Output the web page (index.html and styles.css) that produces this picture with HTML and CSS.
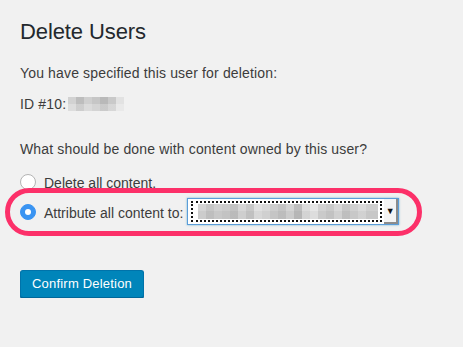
FILE: index.html
```html
<!DOCTYPE html>
<html lang="en">
<head>
  <meta charset="UTF-8" />
  <meta name="viewport" content="width=device-width, initial-scale=1.0" />
  <title>Delete Users</title>
  <link rel="stylesheet" href="styles.css">
</head>
<body>

  <div class="wrap">
    <h1>Delete Users</h1>

    <p class="intro">You have specified this user for deletion:</p>

    <ul class="user-list">
      <li>ID #10: <span class="blur blur-name"></span></li>
    </ul>

    <fieldset class="delete-options">
      <p class="question">What should be done with content owned by this user?</p>
      <ul>
        <li class="option">
          <span class="radio"></span>
          <label>Delete all content.</label>
        </li>
        <!-- fila marcada con el contorno rojo -->
        <li class="option marked">
          <span class="radio checked"></span>
          <label>Attribute all content to:</label>
          <div class="fake-select">
            <div class="focus-ring">
              <span class="blur blur-user"></span>
            </div>
            <div class="arrow">&#9660;</div>
          </div>
        </li>
      </ul>
    </fieldset>

    <button class="button-primary">Confirm Deletion</button>
  </div>

</body>
</html>
```

FILE: styles.css
```css
body {
  background-color: #f1f1f1;
  color: #3c3c3c;
  font-family: "Liberation Sans", Arial, sans-serif;
  font-size: 14px;
  letter-spacing: 0.15px;
  line-height: 18px;
  margin: 0;
}
.wrap {
  padding: 0 20px;
}
h1 {
  color: #23282d;
  font-size: 22px;
  font-weight: normal;
  letter-spacing: -0.1px;
  line-height: 30px;
  margin: 17px 0 0;
}
.intro {
  margin: 17px 0 0;
}
ul {
  list-style: none;
  margin: 0;
  padding: 0;
}
.user-list {
  margin-top: 13px;
}
.user-list li {
  display: flex;
  align-items: center;
}

.blur {
  display: inline-block;
}
.blur-name {
  width: 56px;
  height: 14px;
  margin-left: 2px;
  background:
    linear-gradient(180deg, rgba(255,255,255,0) 50%, rgba(255,255,255,0.25) 50%),
    linear-gradient(90deg, #d2d2d2 0 8px, #bdbdbd 8px 16px, #cfcfcf 16px 24px, #c6c6c6 24px 32px, #b9b9b9 32px 40px, #c9c9c9 40px 48px, #e2e2e2 48px 56px);
}

.delete-options {
  border: none;
  margin: 0;
  padding: 0;
}
.question {
  margin: 27px 0 10px;
}
.delete-options ul {
  display: flex;
  flex-direction: column;
  gap: 3px;
}
.option {
  display: flex;
  align-items: center;
  height: 27px;
}
.option label {
  margin-top: 2px;
  letter-spacing: 0;
}
.radio {
  width: 14px;
  height: 14px;
  border: 1px solid #b4b4b4;
  border-radius: 50%;
  background: #fff;
  margin-right: 8px;
  box-sizing: content-box;
  flex: none;
}
.radio.checked {
  background: #3a94f2;
  border-color: #3a94f2;
  display: flex;
  align-items: center;
  justify-content: center;
}
.radio.checked::after {
  content: "";
  width: 6px;
  height: 6px;
  border-radius: 50%;
  background: #fff;
}

.marked {
  position: relative;
}
.marked::before {
  content: "";
  position: absolute;
  top: -10px;
  bottom: -11px;
  left: -15px;
  right: 21px;
  border: 5px solid #fc3069;
  border-radius: 26px;
  pointer-events: none;
}

.fake-select {
  display: flex;
  width: 212px;
  height: 27px;
  margin-left: 4px;
  box-sizing: border-box;
  border: 1px solid #5b9dd9;
  box-shadow: 0 0 2px rgba(30,140,190,0.6);
  background: #fff;
}
.focus-ring {
  flex: 1;
  margin: 2px 2px 2px 3px;
  border: 2px dotted #111;
  display: flex;
  align-items: center;
  padding-left: 5px;
}
.blur-user {
  width: 180px;
  height: 15px;
  background:
    linear-gradient(180deg, rgba(255,255,255,0) 50%, rgba(0,0,0,0.04) 50%),
    linear-gradient(90deg, #d4d4d4 0 8px, #c6c6c6 8px 16px, #d0d0d0 16px 24px, #cbcbcb 24px 32px, #c2c2c2 32px 40px, #d6d6d6 40px 48px, #c8c8c8 48px 56px, #e0e0e0 56px 64px, #d8d8d8 64px 72px, #cdcdcd 72px 80px, #c4c4c4 80px 88px, #d3d3d3 88px 96px, #bdbdbd 96px 104px, #dcdcdc 104px 112px, #e6e6e6 112px 120px, #d2d2d2 120px 128px, #cacaca 128px 136px, #d8d8d8 136px 144px, #c6c6c6 144px 152px, #d0d0d0 152px 160px, #dadada 160px 168px, #cfcfcf 168px 180px);
}
.arrow {
  width: 14px;
  font-size: 9px;
  color: #111;
  display: flex;
  align-items: center;
  justify-content: center;
  background: #f4f4f4;
  border-right: 2px solid #8c8c8c;
  border-bottom: 2px solid #8c8c8c;
  box-sizing: border-box;
}

.button-primary {
  margin-top: 45px;
  height: 28px;
  padding: 0 11px 1px;
  background: #0085ba;
  border: 1px solid #0073aa;
  border-bottom-color: #006799;
  box-shadow: 0 1px 0 #006799;
  border-radius: 3px;
  color: #fff;
  font-family: "Liberation Sans", Arial, sans-serif;
  font-size: 13px;
  letter-spacing: 0.2px;
  cursor: pointer;
}
```
